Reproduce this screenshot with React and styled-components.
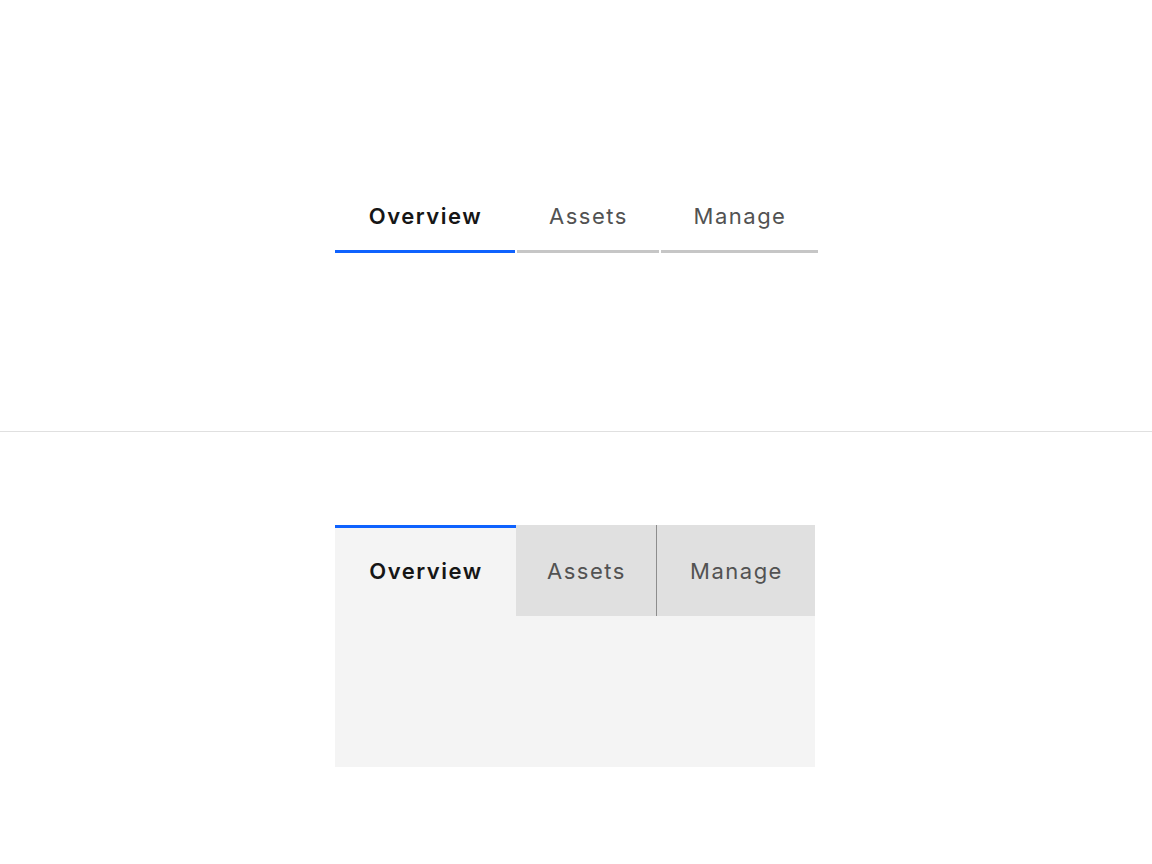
import React from "react";
import styled, { createGlobalStyle } from "styled-components";

const Global = createGlobalStyle`
  html, body { margin: 0; padding: 0; background: #ffffff; }
  body { font-family: Inter, "Noto Sans", sans-serif; }
`;

const Page = styled.div`
  width: 1152px;
  height: 864px;
  display: flex;
  flex-direction: column;
`;

const Section = styled.section`
  height: ${(p) => p.$h}px;
  padding-top: ${(p) => p.$pt}px;
  box-sizing: border-box;
  display: flex;
  flex-direction: column;
  align-items: flex-start;
  padding-left: 335px;
`;

const Rule = styled.hr`
  margin: 0;
  border: 0;
  height: 1px;
  background: #e0e0e0;
`;

const LineTabs = styled.div`
  display: flex;
  gap: 2px;
`;

const LineTab = styled.button`
  all: unset;
  box-sizing: border-box;
  width: ${(p) => p.$w}px;
  height: 57px;
  display: flex;
  align-items: center;
  justify-content: center;
  padding-bottom: 14px;
  padding-left: 1px;
  font-family: Inter, "Noto Sans", sans-serif;
  font-size: 22px;
  letter-spacing: 1.5px;
  font-weight: ${(p) => (p.$active ? 600 : 400)};
  color: ${(p) => (p.$active ? "#161616" : "#525252")};
  border-bottom: 3px solid ${(p) => (p.$active ? "#0f62fe" : "#c6c6c6")};
  cursor: pointer;
`;

const Contained = styled.div`
  width: 480px;
  display: flex;
  flex-direction: column;
`;

const BoxTabs = styled.div`
  display: flex;
`;

const BoxTab = styled.button`
  all: unset;
  box-sizing: border-box;
  width: ${(p) => p.$w}px;
  height: 91px;
  display: flex;
  align-items: center;
  justify-content: center;
  padding-top: ${(p) => (p.$active ? 0 : 3)}px;
  padding-bottom: 2px;
  padding-left: 1px;
  font-family: Inter, "Noto Sans", sans-serif;
  font-size: 22px;
  letter-spacing: 1.5px;
  font-weight: ${(p) => (p.$active ? 600 : 400)};
  color: ${(p) => (p.$active ? "#161616" : "#525252")};
  background: ${(p) => (p.$active ? "#f4f4f4" : "#e0e0e0")};
  border-top: ${(p) => (p.$active ? "3px solid #0f62fe" : "none")};
  cursor: pointer;
`;

const Divider = styled.span`
  width: 1px;
  height: 91px;
  background: #8d8d8d;
`;

const Panel = styled.div`
  height: 151px;
  background: #f4f4f4;
`;

export default function App() {
  return (
    <Page>
      <Global />
      <Section $h={431} $pt={196}>
        <LineTabs role="tablist">
          <LineTab $active $w={180}>Overview</LineTab>
          <LineTab $w={142}>Assets</LineTab>
          <LineTab $w={157}>Manage</LineTab>
        </LineTabs>
      </Section>
      <Rule />
      <Section $h={432} $pt={93}>
        <Contained>
          <BoxTabs role="tablist">
            <BoxTab $active $w={181}>Overview</BoxTab>
            <BoxTab $w={140}>Assets</BoxTab>
            <Divider />
            <BoxTab $w={158}>Manage</BoxTab>
          </BoxTabs>
          <Panel />
        </Contained>
      </Section>
    </Page>
  );
}
